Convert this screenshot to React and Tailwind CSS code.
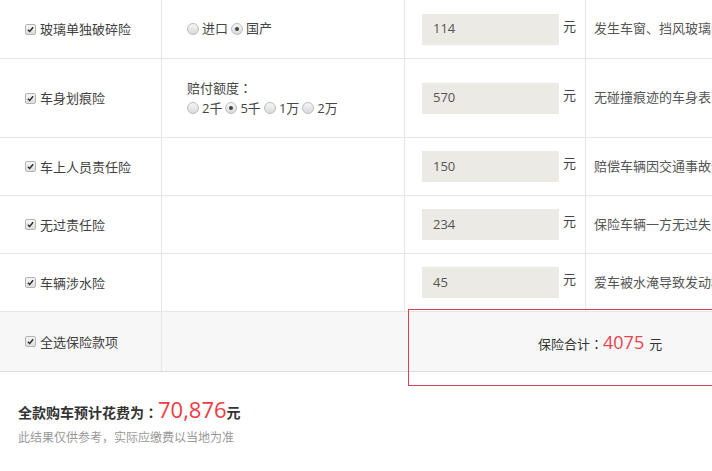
import React from "react";

const FONT = { fontFamily: '"Open Sans", "Noto Sans CJK SC", sans-serif' };
const COLON = { fontFamily: '"Noto Sans CJK TC", sans-serif' };

function Check() {
  return (
    <span className="inline-flex items-center justify-center w-[11px] h-[11px] rounded-[2px] border border-[#b5b5b5] bg-gradient-to-b from-[#f6f6f6] to-[#dedede] shrink-0 mr-[1px]">
      <svg width="7" height="7" viewBox="0 0 8 8">
        <path d="M1 4.2 L3.1 6.3 L7 1.5" fill="none" stroke="#2a2a2a" strokeWidth="1.6" />
      </svg>
    </span>
  );
}

function Radio({ on }) {
  return (
    <span className="inline-flex items-center justify-center w-[12px] h-[12px] rounded-full border border-[#bcbcbc] bg-gradient-to-b from-[#f6f6f6] to-[#dadada] shrink-0">
      {on && <span className="w-[4px] h-[4px] rounded-full bg-[#444]" />}
    </span>
  );
}

function Row({ h, label, mid, value, desc }) {
  return (
    <div className={`flex border-b border-[#e6e6e6] ${h}`}>
      <div className="w-[162px] shrink-0 border-r border-[#e6e6e6] flex items-center pl-[25px] gap-[3px]">
        <Check />
        <span className="text-[13px] text-[#404040] leading-[20px]">{label}</span>
      </div>
      <div className="w-[243px] shrink-0 border-r border-[#e6e6e6] flex items-center pl-[25px]">
        {mid}
      </div>
      <div className="w-[181px] shrink-0 border-r border-[#e6e6e6] flex items-center pl-[17px]">
        <div className="w-[137px] h-[31px] bg-[#ebeae5] flex items-center pl-[11px] text-[13px] text-[#555]">
          {value}
        </div>
        <span className="ml-[4px] -mt-[5px] text-[13px] text-[#444]">元</span>
      </div>
      <div className="flex-1 min-w-0 overflow-hidden whitespace-nowrap flex items-center pl-[8px] text-[13px] text-[#555]">
        {desc}
      </div>
    </div>
  );
}

export default function App() {
  return (
    <div style={FONT} className="w-[712px] h-[471px] overflow-hidden bg-white relative">
      <Row
        h="h-[59px]"
        label="玻璃单独破碎险"
        mid={
          <div className="flex items-center gap-[3px] text-[13px] text-[#444]">
            <Radio />
            <span>进口</span>
            <Radio on />
            <span>国产</span>
          </div>
        }
        value="114"
        desc="发生车窗、挡风玻璃的单独破碎损失"
      />
      <Row
        h="h-[79px]"
        label="车身划痕险"
        mid={
          <div className="flex flex-col text-[13px] text-[#444] leading-[20px]">
            <span>
              赔付额度<span style={COLON}>：</span>
            </span>
            <div className="flex items-center gap-[3px]">
              <Radio />
              <span>2千</span>
              <Radio on />
              <span>5千</span>
              <Radio />
              <span>1万</span>
              <Radio />
              <span>2万</span>
            </div>
          </div>
        }
        value="570"
        desc="无碰撞痕迹的车身表面油漆单独划伤"
      />
      <Row h="h-[58px]" label="车上人员责任险" mid={null} value="150" desc="赔偿车辆因交通事故造成的车上人员伤亡" />
      <Row h="h-[58px]" label="无过责任险" mid={null} value="234" desc="保险车辆一方无过失" />
      <Row h="h-[58px]" label="车辆涉水险" mid={null} value="45" desc="爱车被水淹导致发动机损坏" />

      <div className="relative flex h-[60px] bg-[#f7f7f7] border-b border-[#dcdcdc]">
        <div className="w-[162px] shrink-0 border-r border-[#e6e6e6] flex items-center pl-[25px] gap-[3px]">
          <Check />
          <span className="text-[13px] text-[#404040] leading-[20px]">全选保险款项</span>
        </div>
        <div className="flex-1" />
        <div className="absolute left-[408px] top-[-3px] w-[400px] h-[77px] border border-[#d64552] pl-[129px] pt-[21px]">
          <div className="flex items-baseline text-[13px] text-[#333] leading-[22px] whitespace-nowrap">
            <span>
              保险合计<span style={COLON}>：</span>
            </span>
            <span className="text-[18px] text-[#e8444e]">4075</span>
            <span className="ml-[5px]">元</span>
          </div>
        </div>
      </div>

      <div className="pl-[18px] pt-[24px]">
        <div className="flex items-baseline leading-[26px] whitespace-nowrap">
          <span className="text-[14px] font-bold text-[#333]">
            全款购车预计花费为<span style={COLON}>：</span>
          </span>
          <span className="text-[22px] text-[#ef3b44]">70,876</span>
          <span className="text-[14px] font-bold text-[#333]">元</span>
        </div>
        <div className="mt-[3px] text-[12px] text-[#999] leading-[18px]">此结果仅供参考，实际应缴费以当地为准</div>
      </div>
    </div>
  );
}
